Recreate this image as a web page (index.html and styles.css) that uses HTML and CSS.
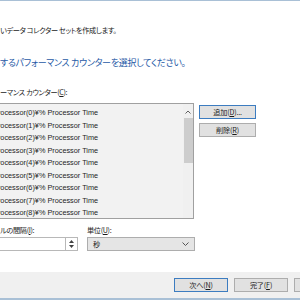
FILE: index.html
```html
<!DOCTYPE html>
<html>
<head>
    <meta charset="utf-8">
    <link rel="stylesheet" href="styles.css">
</head>
<body>
<div class="top-line"></div>
<div class="content">
    <p class="intro">いデータ コレクター セットを作成します。</p>
    <h1 class="heading">するパフォーマンス カウンターを選択してください。</h1>
    <div class="jp-label">ーマンス カウンター(<u>C</u>):</div>

    <div class="counter-row">
        <div class="listbox">
            <ul class="items">
                <li>¥Processor(0)¥% Processor Time</li>
                <li>¥Processor(1)¥% Processor Time</li>
                <li>¥Processor(2)¥% Processor Time</li>
                <li>¥Processor(3)¥% Processor Time</li>
                <li>¥Processor(4)¥% Processor Time</li>
                <li>¥Processor(5)¥% Processor Time</li>
                <li>¥Processor(6)¥% Processor Time</li>
                <li>¥Processor(7)¥% Processor Time</li>
                <li>¥Processor(8)¥% Processor Time</li>
            </ul>
            <div class="scrollbar">
                <svg class="arrow-up" width="6" height="4" viewBox="0 0 6 4"><path d="M0.5 3.5 L3 1 L5.5 3.5" fill="none" stroke="#606060" stroke-width="1"/></svg>
                <div class="thumb"></div>
            </div>
        </div>
        <div class="side-buttons">
            <button class="btn default">追加(<u>D</u>)...</button>
            <button class="btn">削除(<u>R</u>)</button>
        </div>
    </div>

    <div class="interval-row">
        <div class="field">
            <div class="jp-label">ルの間隔(<u>I</u>):</div>
            <div class="spin">
                <div class="spin-input"></div>
                <div class="spin-buttons">
                    <svg width="5" height="3" viewBox="0 0 5 3"><path d="M0 3 L2.5 0 L5 3Z" fill="#404040"/></svg>
                    <svg width="5" height="3" viewBox="0 0 5 3"><path d="M0 0 L2.5 3 L5 0Z" fill="#404040"/></svg>
                </div>
            </div>
        </div>
        <div class="field">
            <div class="jp-label">単位(<u>U</u>):</div>
            <div class="select">
                <span>秒</span>
                <svg width="7" height="4" viewBox="0 0 7 4"><path d="M0.5 0.5 L3.5 3.5 L6.5 0.5" fill="none" stroke="#555" stroke-width="1"/></svg>
            </div>
        </div>
    </div>
</div>

<div class="footer">
    <button class="btn default wide">次へ(<u>N</u>)</button>
    <button class="btn wide">完了(<u>F</u>)</button>
    <button class="btn wide">キャンセル</button>
</div>
<div class="bottom-line"></div>
</body>
</html>
```

FILE: styles.css
```css
html, body {
    margin: 0;
    width: 300px;
    height: 300px;
    overflow: hidden;
    background: #ffffff;
}

body {
    font-family: "Noto Sans CJK JP", "Liberation Sans", sans-serif;
    font-feature-settings: "palt";
    color: #1a1a1a;
    font-size: 7.2px;
    letter-spacing: -0.35px;
    display: flex;
    flex-direction: column;
}

.top-line {
    height: 1px;
    background: #a9c0d6;
}

.content {
    flex: 1;
}

.intro {
    margin: 24px 0 0 0;
    line-height: 10px;
}

.heading {
    margin: 21px 0 0 0;
    font-size: 9px;
    letter-spacing: -0.3px;
    line-height: 14px;
    font-weight: normal;
    color: #1f5aa6;
}

.jp-label {
    line-height: 10px;
}

.content > .jp-label {
    margin-top: 17px;
}

.counter-row {
    display: flex;
    margin-top: 6px;
}

.listbox {
    display: flex;
    width: 194px;
    height: 114px;
    margin-left: -2px;
    border: 1px solid #a0a0a0;
    background: #f2f2f2;
    overflow: hidden;
}

.items {
    flex: 1;
    list-style: none;
    margin: 0;
    padding: 3px 0 0 0;
    font-family: "Liberation Sans", sans-serif;
    font-size: 7.3px;
    letter-spacing: 0;
    line-height: 12.5px;
    color: #1e1e1e;
    white-space: nowrap;
    overflow: hidden;
}

.items li {
    text-indent: -10px;
}

.scrollbar {
    width: 10px;
    background: #f0f0f0;
    display: flex;
    flex-direction: column;
    align-items: center;
}

.arrow-up {
    margin-top: 6px;
}

.thumb {
    width: 9px;
    height: 45px;
    margin-top: 4px;
    background: #cdcdcd;
}

.side-buttons {
    display: flex;
    flex-direction: column;
    gap: 4px;
    margin-left: 5px;
    padding-top: 2px;
}

.btn {
    width: 57px;
    height: 14px;
    padding: 0;
    border: 1px solid #adadad;
    background: #e1e1e1;
    font-family: "Noto Sans CJK JP", "Liberation Sans", sans-serif;
    font-feature-settings: "palt";
    font-size: 7.2px;
    letter-spacing: -0.2px;
    line-height: 12px;
    color: #1a1a1a;
}

.btn.default {
    border-color: #3c7cc0;
}

.interval-row {
    display: flex;
    margin-top: 6px;
    gap: 9px;
}

.interval-row .jp-label {
    margin-bottom: 2px;
}

.spin {
    display: flex;
    height: 14px;
}

.spin-input {
    width: 66px;
    margin-left: -2px;
    border: 1px solid #b8b8b8;
    background: #fff;
}

.spin-buttons {
    width: 11px;
    border: 1px solid #b8b8b8;
    border-left: none;
    display: flex;
    flex-direction: column;
    align-items: center;
    justify-content: space-evenly;
}

.select {
    width: 96px;
    height: 12px;
    border: 1px solid #adadad;
    background: #e5e5e5;
    display: flex;
    align-items: center;
    justify-content: space-between;
    padding: 0 5px 0 5px;
}

.footer {
    height: 26px;
    background: #f0f0f0;
    display: flex;
    gap: 6px;
    padding: 6px 0 0 174px;
    box-sizing: border-box;
    overflow: hidden;
}

.btn.wide {
    width: 54px;
    flex-shrink: 0;
}

.bottom-line {
    height: 2px;
    background: #a9c0d6;
}
```
